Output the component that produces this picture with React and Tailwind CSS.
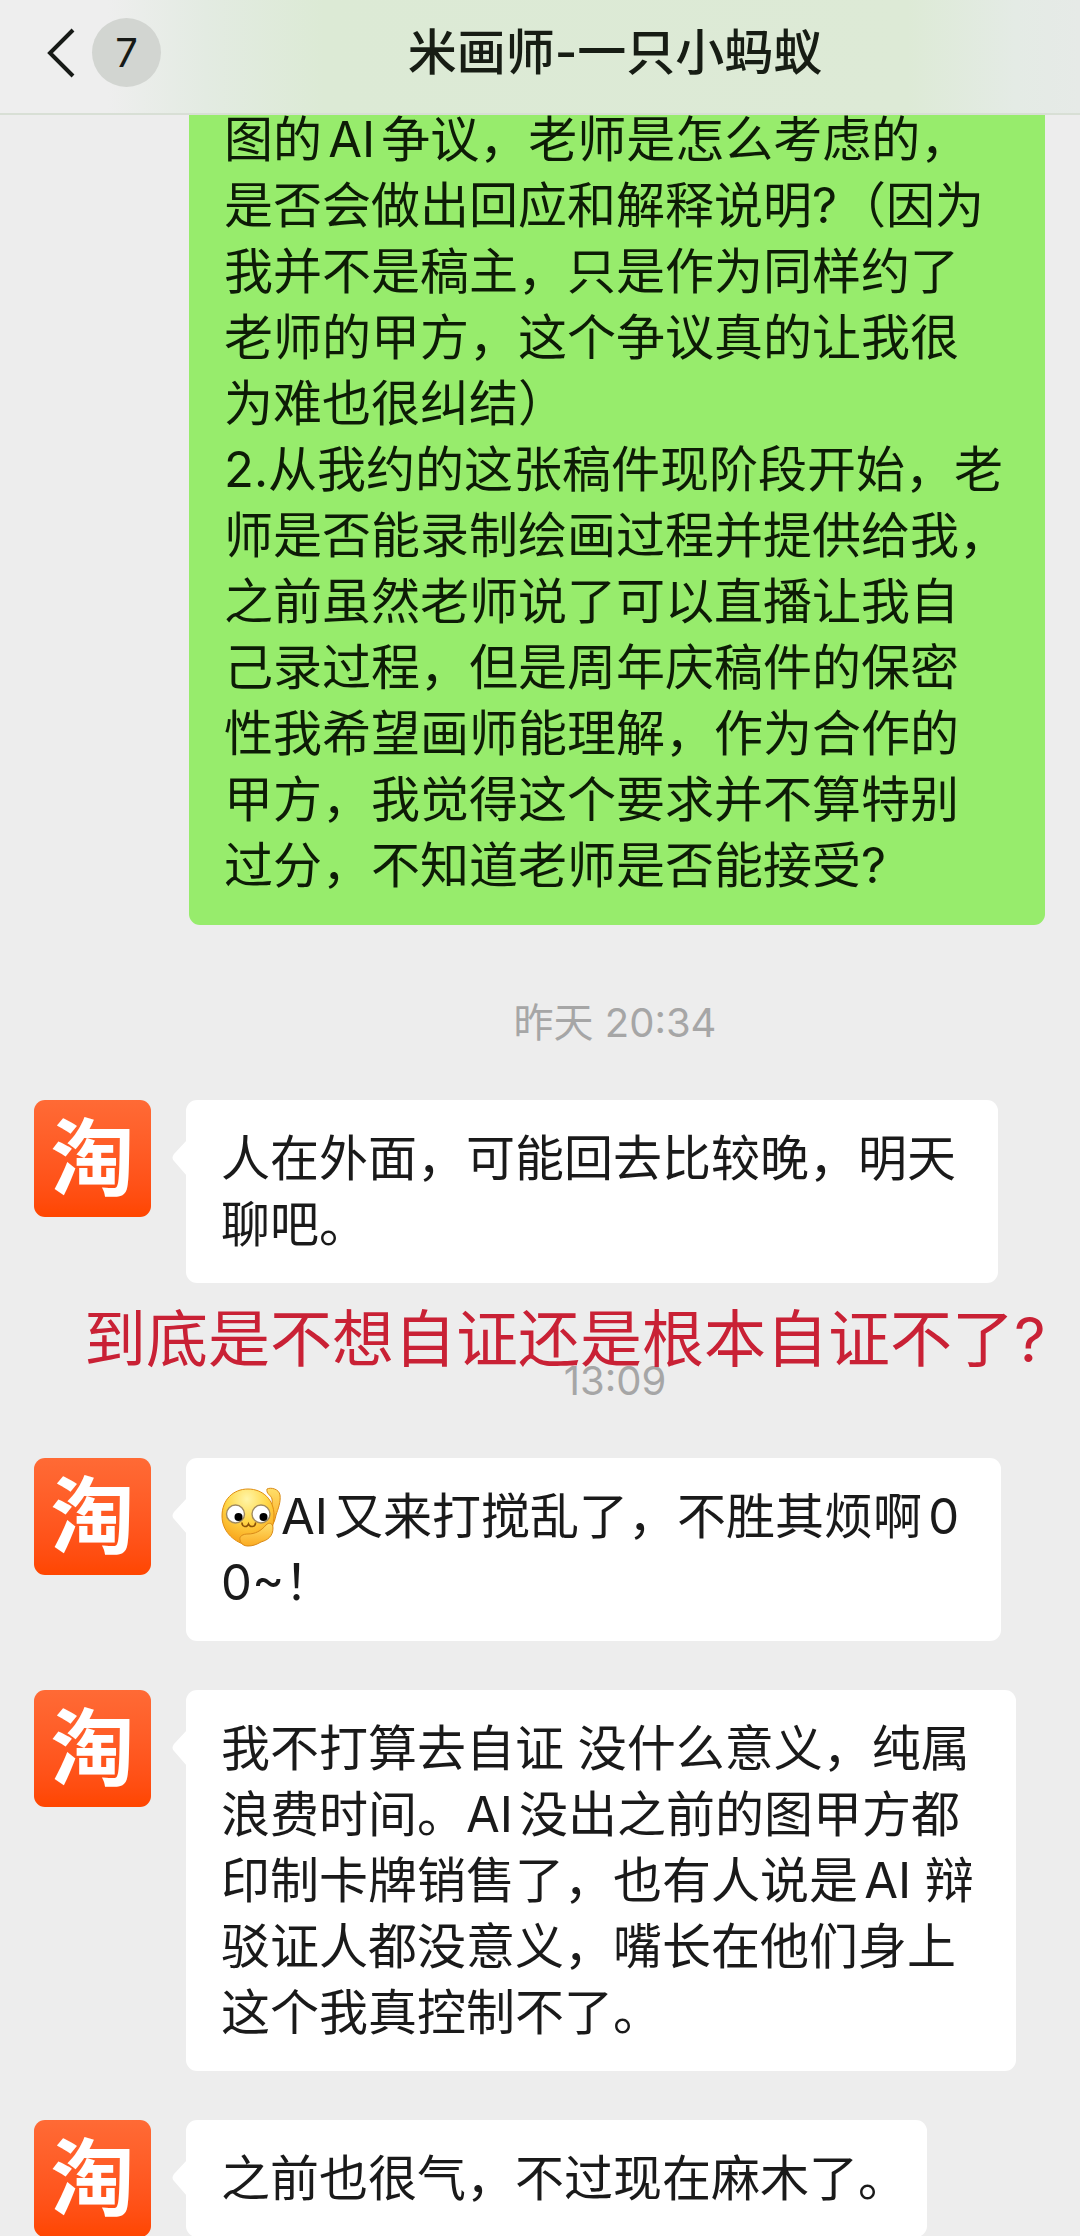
import React from "react";

const sentText = `图的AI争议，老师是怎么考虑的，
是否会做出回应和解释说明?（因为
我并不是稿主，只是作为同样约了
老师的甲方，这个争议真的让我很
为难也很纠结）
2.从我约的这张稿件现阶段开始，老
师是否能录制绘画过程并提供给我，
之前虽然老师说了可以直播让我自
己录过程，但是周年庆稿件的保密
性我希望画师能理解，作为合作的
甲方，我觉得这个要求并不算特别
过分，不知道老师是否能接受?`;

const Avatar = () => {
	return (
		<div className="flex size-[117px] shrink-0 items-center justify-center overflow-hidden rounded-[11px] bg-linear-to-b from-[#ff6a35] to-[#ff4600]">
			<span className="text-[84px] leading-none font-bold text-white">淘</span>
		</div>
	);
};

const Emoji = () => {
	return (
		<svg
			viewBox="0 0 60 60"
			className="inline-block size-[60px] align-[-13px]"
			role="img"
			aria-label="emoji"
		>
			<defs>
				<radialGradient id="face" cx="0.48" cy="0.18" r="0.85">
					<stop offset="0" stopColor="#fff5a8" />
					<stop offset="0.45" stopColor="#ffd84a" />
					<stop offset="1" stopColor="#f79a12" />
				</radialGradient>
				<linearGradient id="hand" x1="0" y1="0" x2="0" y2="1">
					<stop offset="0" stopColor="#ffdf6a" />
					<stop offset="1" stopColor="#fbab22" />
				</linearGradient>
			</defs>
			<path
				d="M46 2c4-2 12 0 13 6 1 7-2 14-4 20-1 5-2 8-4 10l-5-8c3-6 6-13 5-18-1-4-6-5-5-10z"
				fill="url(#hand)"
				stroke="#d98a18"
				strokeWidth="1"
			/>
			<path
				d="M27 2c15 0 26 11 26 26 0 9-2 17-8 22-6 6-13 8-20 8C11 54 1 43 1 29 1 13 12 2 27 2z"
				fill="url(#face)"
				stroke="#e08e12"
				strokeWidth="1"
			/>
			<circle cx="14.5" cy="27" r="9" fill="#fff" stroke="#a08a60" strokeWidth="1.4" />
			<circle cx="40" cy="27" r="9" fill="#fff" stroke="#a08a60" strokeWidth="1.4" />
			<circle cx="17.5" cy="30" r="4" fill="#000" />
			<circle cx="42.5" cy="30" r="4" fill="#000" />
			<path
				d="M21 36c0 4 5 5 6.5 1 1.5 4 7 3 7-1"
				fill="none"
				stroke="#8a5208"
				strokeWidth="1.6"
				strokeLinecap="round"
			/>
			<path
				d="M19 53c-1-4 3-6 8-6 7 0 13-3 18-9 3-3 7-2 7 3 0 8-5 12-12 14-5 3-9 4-13 4-4 0-7-2-8-6z"
				fill="url(#hand)"
				stroke="#d98a18"
				strokeWidth="1"
			/>
		</svg>
	);
};

// a single line ending in a full stop already carries its own space on the right
const Received = ({ children, tight }) => {
	return (
		<div className="flex items-start gap-[35px] pl-[34px]">
			<Avatar />
			<div
				className={`relative rounded-[11px] bg-white pt-[26px] pb-[25px] pl-[35px] text-[#1a1a1a] ${
					tight ? "pr-5" : "pr-[42px]"
				}`}
			>
				<svg
					viewBox="0 0 15 36"
					className="absolute top-10 -left-[14px] h-9 w-[15px] fill-white"
					aria-hidden="true"
				>
					<path d="M15 0L2 14q-3 4 0 7L15 36z" />
				</svg>
				<p className="whitespace-pre">{children}</p>
			</div>
		</div>
	);
};

const Time = ({ children }) => {
	return (
		<div className="pt-[75px] pb-[54px] pl-[150px] text-center text-[40px] leading-[46px] text-[#a6a6a6]">
			{children}
		</div>
	);
};

const App = () => {
	return (
		<div className="min-h-screen overflow-x-hidden bg-[#ededed] font-[Inter,'Noto_Sans_CJK_SC',sans-serif] text-[49px] leading-[66px] [text-autospace:normal]">
			<header className="relative z-10 flex h-[115px] items-center border-b-2 border-[#d8dfd5] bg-[linear-gradient(90deg,#eeeeee_10%,#e3ebe2_19%,#dcead5_30%,#ddead6_84%,#e4ebe5_94%,#e6eae7)] pb-2">
				<button type="button" aria-label="返回" className="flex items-center gap-4 pl-[46px]">
					<svg
						viewBox="0 0 30 52"
						className="h-[52px] w-[30px] fill-none stroke-[#171a17] stroke-[4]"
						aria-hidden="true"
					>
						<path d="M27 3L4 26l23 23" />
					</svg>
					<span className="flex size-[69px] items-center justify-center rounded-full bg-[#d2d5d1] text-[40px] text-[#171a17]">
						7
					</span>
				</button>
				<h1 className="pointer-events-none absolute inset-x-0 pl-[150px] text-center font-medium text-[#171d14]">
					米画师-一只小蚂蚁
				</h1>
			</header>

			<main className="-mt-9">
				<div className="mr-[35px] ml-[189px] rounded-[11px] bg-[#97ec6c] pt-7 pb-[26px] pl-[35px] text-[#0d1c06]">
					<p className="whitespace-pre">{sentText}</p>
				</div>

				<Time>昨天 20:34</Time>

				<Received>{"人在外面，可能回去比较晚，明天\n聊吧。"}</Received>

				<div className="relative">
					<Time>13:09</Time>
					{/* red note written over the chat */}
					<p className="absolute top-6 left-[84px] text-[62px] whitespace-nowrap text-[#c92135]">
						到底是不想自证还是根本自证不了?
					</p>
				</div>

				<div className="flex flex-col gap-[49px]">
					<Received>
						<Emoji />
						{"AI又来打搅乱了，不胜其烦啊0\n0~！"}
					</Received>
					<Received>
						{
							"我不打算去自证 没什么意义，纯属\n浪费时间。AI没出之前的图甲方都\n印制卡牌销售了，也有人说是AI 辩\n驳证人都没意义，嘴长在他们身上\n这个我真控制不了。"
						}
					</Received>
					<Received tight>之前也很气，不过现在麻木了。</Received>
				</div>
			</main>
		</div>
	);
};

export default App;
